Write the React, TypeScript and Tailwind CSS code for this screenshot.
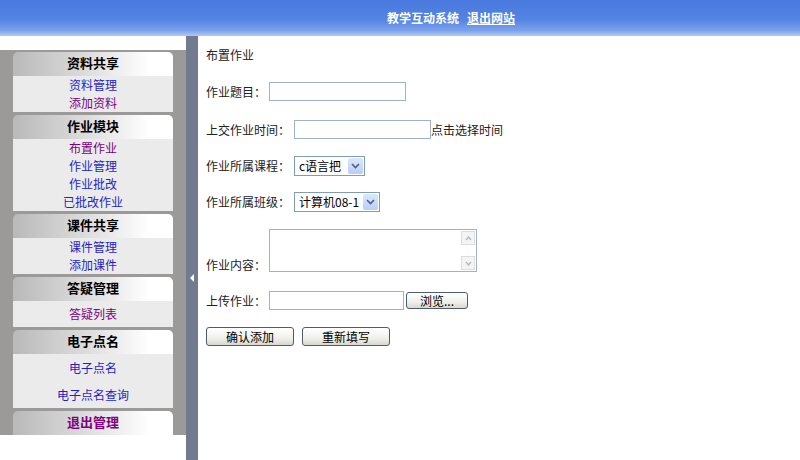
const font = { fontFamily: '"Noto Sans CJK SC", "Liberation Sans", sans-serif' };

type Item = { label: string; visited?: boolean };
type Section = { title: string; items: Item[]; itemH: string; exit?: boolean };

const sections: Section[] = [
  { title: "资料共享", items: [{ label: "资料管理" }, { label: "添加资料", visited: true }], itemH: "h-[18px]" },
  {
    title: "作业模块",
    items: [{ label: "布置作业", visited: true }, { label: "作业管理" }, { label: "作业批改" }, { label: "已批改作业" }],
    itemH: "h-[18px]",
  },
  { title: "课件共享", items: [{ label: "课件管理" }, { label: "添加课件" }], itemH: "h-[18px]" },
  { title: "答疑管理", items: [{ label: "答疑列表", visited: true }], itemH: "h-[26px]" },
  { title: "电子点名", items: [{ label: "电子点名" }, { label: "电子点名查询" }], itemH: "h-[27px]" },
  { title: "退出管理", items: [], itemH: "", exit: true },
];

const SideMenu = () => (
  <div className="flex w-[160px] flex-col gap-[3px]">
    {sections.map((s) => (
      <div key={s.title} className="flex flex-col">
        <div className="flex h-[24px] items-center justify-center rounded-t-[5px] bg-[linear-gradient(to_right,#b9b9b9,#dcdcdc_45%,#ffffff_85%)] pb-[2px]">
          <span className={`text-[13px] font-bold ${s.exit ? "text-[#800080]" : "text-black"}`}>{s.title}</span>
        </div>
        {s.items.length > 0 && (
          <div className="flex flex-col bg-[#ebebeb]">
            {s.items.map((it) => (
              <a
                key={it.label}
                className={`flex ${s.itemH} items-center justify-center text-[12px] ${it.visited ? "text-[#800080]" : "text-[#1f1fc8]"}`}
              >
                {it.label}
              </a>
            ))}
          </div>
        )}
      </div>
    ))}
  </div>
);

const TextBox = ({ w }: { w: string }) => <div className={`${w} h-[19px] border border-[#9fb3c6] bg-white`} />;

const Chevron = () => (
  <svg width="9" height="6" viewBox="0 0 9 6">
    <path d="M1 1 L4.5 4.5 L8 1" fill="none" stroke="#4d6185" strokeWidth="1.6" />
  </svg>
);

const Select = ({ w, value }: { w: string; value: string }) => (
  <div className={`${w} flex h-[20px] items-center border border-[#7f9db9] bg-white`}>
    <span className="flex-1 pl-[4px] text-[12px] leading-none text-black">{value}</span>
    <div className="m-[1px] flex h-[16px] w-[15px] items-center justify-center rounded-[2px] bg-[linear-gradient(to_bottom,#dce7fd,#b8cdf8)]">
      <Chevron />
    </div>
  </div>
);

const XpButton = ({ w, label, h = "h-[19px]" }: { w: string; label: string; h?: string }) => (
  <div
    className={`${w} ${h} flex items-center justify-center rounded-[3px] border border-[#4a5d75] bg-[linear-gradient(to_bottom,#ffffff,#f0f0ea_60%,#d8d8d0)] text-[12px] leading-none text-black`}
  >
    {label}
  </div>
);

const ScrollArrow = ({ up }: { up?: boolean }) => (
  <div className="flex h-[14px] w-[14px] items-center justify-center border border-[#dcdcdc] bg-[#f4f4f4]">
    <svg width="7" height="5" viewBox="0 0 7 5">
      <path d={up ? "M1 4 L3.5 1 L6 4" : "M1 1 L3.5 4 L6 1"} fill="none" stroke="#b8b8b8" strokeWidth="1.3" />
    </svg>
  </div>
);

export default function App() {
  return (
    <div className="flex h-[460px] w-[800px] flex-col overflow-hidden bg-white" style={font}>
      <div className="flex h-[36px] shrink-0 items-center bg-[linear-gradient(to_bottom,#4a79de_0%,#5384e3_55%,#7da2ec_85%,#b3c9f5_100%)] pl-[387px]">
        <span className="text-[12px] font-bold text-white">教学互动系统</span>
        <a className="ml-[8px] text-[12px] font-bold text-white underline">退出网站</a>
      </div>
      <div className="flex flex-1">
        <div className="flex w-[186px] flex-col pt-[14px]">
          <div className="flex bg-[#9c9a98] px-[13px] pt-[2px]">
            <SideMenu />
          </div>
        </div>
        <div className="relative w-[12px] bg-[#727a90]">
          <div className="absolute left-[4px] top-[238px] h-0 w-0 border-y-[4px] border-r-[4px] border-y-transparent border-r-white" />
        </div>
        <div className="flex flex-1 flex-col pl-[8px] pt-[11px] text-[12px] text-[#222]">
          <div className="h-[16px] leading-[16px]">布置作业</div>

          <div className="mt-[19px] flex items-center">
            <span className="w-[63px]">作业题目：</span>
            <TextBox w="w-[137px]" />
          </div>

          <div className="mt-[19px] flex items-center">
            <span className="w-[88px]">上交作业时间：</span>
            <TextBox w="w-[137px]" />
            <span>点击选择时间</span>
          </div>

          <div className="mt-[17px] flex items-center">
            <span className="w-[88px]">作业所属课程：</span>
            <Select w="w-[71px]" value="c语言把" />
          </div>

          <div className="mt-[16px] flex items-center">
            <span className="w-[88px]">作业所属班级：</span>
            <Select w="w-[86px]" value="计算机08-1" />
          </div>

          <div className="mt-[17px] flex items-end">
            <span className="mb-[-1px] w-[63px] leading-[16px]">作业内容：</span>
            <div className="flex h-[43px] w-[208px] justify-end border border-[#9fb3c6] bg-white p-[1px]">
              <div className="flex flex-col justify-between">
                <ScrollArrow up />
                <ScrollArrow />
              </div>
            </div>
          </div>

          <div className="mt-[19px] flex items-center">
            <span className="w-[63px]">上传作业：</span>
            <TextBox w="w-[135px]" />
            <div className="ml-[2px]">
              <XpButton w="w-[62px]" h="h-[17px]" label="浏览..." />
            </div>
          </div>

          <div className="mt-[17px] flex items-center gap-[8px]">
            <XpButton w="w-[88px]" label="确认添加" />
            <XpButton w="w-[88px]" label="重新填写" />
          </div>
        </div>
      </div>
    </div>
  );
}
